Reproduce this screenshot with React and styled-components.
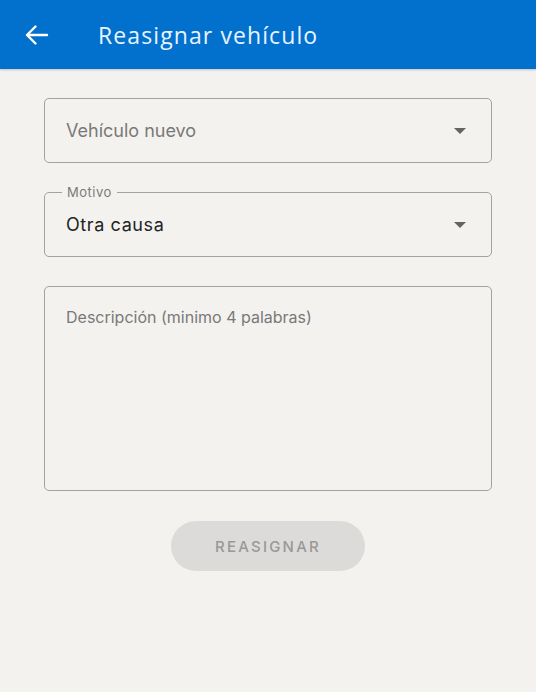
import React from "react";
import styled, { createGlobalStyle } from "styled-components";

const Global = createGlobalStyle`
  html, body { margin: 0; padding: 0; background: #f3f2ef; }
  body { font-family: Inter, "Noto Sans", sans-serif; }
  * { box-sizing: border-box; }
`;

const Page = styled.div`
  width: 536px;
  height: 692px;
  background: #f3f2ef;
  display: flex;
  flex-direction: column;
`;

const AppBar = styled.header`
  height: 69px;
  background: #0270cd;
  display: flex;
  align-items: center;
  padding-left: 25px;
  gap: 49px;
  box-shadow: 0 1px 2px rgba(0, 0, 0, 0.2);
`;

const BackButton = styled.button`
  border: 0;
  background: none;
  padding: 0;
  width: 24px;
  height: 24px;
  display: flex;
  align-items: center;
  justify-content: center;
  color: #fff;
`;

const Title = styled.h1`
  margin: 0;
  font-family: "Open Sans", sans-serif;
  font-weight: 500;
  font-size: 23px;
  letter-spacing: 1.1px;
  color: #e8f4ff;
`;

const Form = styled.main`
  display: flex;
  flex-direction: column;
  align-items: center;
  padding: 29px 44px 0;
  gap: 29px;
`;

const Field = styled.div`
  position: relative;
  width: 448px;
  height: ${(p) => p.$h || 65}px;
  border: 1px solid #a3a2a0;
  border-radius: 5px;
  display: flex;
  align-items: ${(p) => (p.$top ? "flex-start" : "center")};
  padding: ${(p) => (p.$top ? "20px 21px" : "0 21px")};
`;

const Legend = styled.span`
  position: absolute;
  top: -9px;
  left: 17px;
  padding: 0 5px;
  background: #f3f2ef;
  font-size: 13px;
  letter-spacing: 0.5px;
  color: #7b7a78;
`;

const Value = styled.span`
  flex: 1;
  font-size: ${(p) => p.$size || 18}px;
  letter-spacing: ${(p) => (p.$filled ? "0.6px" : "0")};
  color: ${(p) => (p.$filled ? "#232323" : "#7a7978")};
`;

const Caret = styled.span`
  width: 0;
  height: 0;
  border-left: 6px solid transparent;
  border-right: 6px solid transparent;
  border-top: 6px solid #656462;
  margin-right: 4px;
`;

const Submit = styled.button`
  margin-top: 1px;
  width: 194px;
  height: 50px;
  border: 0;
  border-radius: 25px;
  background: #dcdbd9;
  color: #999896;
  font-family: Inter, sans-serif;
  font-weight: 500;
  font-size: 15px;
  letter-spacing: 2.2px;
`;

export default function App() {
  return (
    <Page>
      <Global />
      <AppBar>
        <BackButton aria-label="Volver">
          <svg width="24" height="24" viewBox="0 0 24 24" fill="none" stroke="currentColor" strokeWidth="2.4" strokeLinecap="round" strokeLinejoin="round">
            <path d="M22 12H2.5" />
            <path d="M10.5 3.5L2 12l8.5 8.5" />
          </svg>
        </BackButton>
        <Title>Reasignar vehículo</Title>
      </AppBar>
      <Form>
        <Field>
          <Value>Vehículo nuevo</Value>
          <Caret />
        </Field>
        <Field>
          <Legend>Motivo</Legend>
          <Value $filled>Otra causa</Value>
          <Caret />
        </Field>
        <Field $h={205} $top>
          <Value $size={16}>Descripción (minimo 4 palabras)</Value>
        </Field>
        <Submit>REASIGNAR</Submit>
      </Form>
    </Page>
  );
}
